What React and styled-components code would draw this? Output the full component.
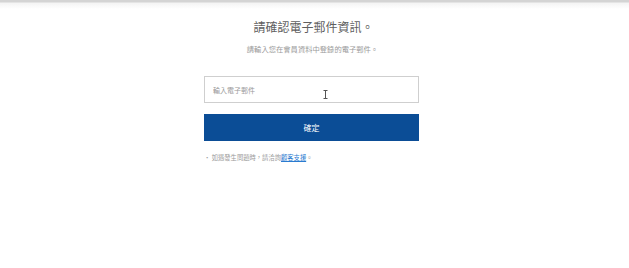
import React from 'react'
import styled, { createGlobalStyle } from 'styled-components'

const GlobalStyle = createGlobalStyle`
  html, body {
    margin: 0;
    padding: 0;
    background: #fff;
    font-family: "Noto Sans CJK TC", "Noto Sans", sans-serif;
  }
`;

const Page = styled.div`
  min-height: 268px;
  padding-right: 6px;
  background: linear-gradient(#d4d4d4 0, #d4d4d4 2px, #f4f4f4 3px, #fff 9px);
`;

const Panel = styled.div`
  width: 215px;
  margin: 0 auto;
  padding-top: 17px;
  display: flex;
  flex-direction: column;
`;

const Title = styled.h1`
  margin: 0;
  padding-left: 4px;
  text-align: center;
  font-size: 12px;
  font-weight: 400;
  line-height: 20px;
  color: #5f5f5f;
`;

const Subtitle = styled.p`
  margin: 6px 0 0;
  padding-left: 2px;
  text-align: center;
  font-size: 7.3px;
  line-height: 12px;
  color: #9a9a9a;
`;

const Field = styled.div`
  position: relative;
  margin-top: 21px;
  height: 27px;
  border: 1px solid #cfcfcf;
  box-sizing: border-box;
  display: flex;
  align-items: center;
  padding-left: 8px;
`;

const Input = styled.input`
  border: none;
  outline: none;
  background: none;
  width: 100%;
  font-family: inherit;
  font-size: 7px;
  color: #555;
  padding: 0;
  &::placeholder {
    color: #999;
  }
`;

const Cursor = styled.svg`
  position: absolute;
  left: 118px;
  top: 13px;
`;

const Button = styled.button`
  margin-top: 11px;
  height: 27px;
  border: none;
  background: #0b4d96;
  color: #fff;
  font-family: inherit;
  font-size: 8px;
  cursor: pointer;
`;

const Note = styled.p`
  margin: 12px 0 0;
  font-size: 6.3px;
  line-height: 10px;
  color: #9a9a9a;
`;

const Link = styled.a`
  color: #2a7bd0;
  text-decoration: underline;
`;

export default function App() {
  return (
    <>
      <GlobalStyle />
      <Page>
        <Panel>
          <Title>請確認電子郵件資訊。</Title>
          <Subtitle>請輸入您在會員資料中登錄的電子郵件。</Subtitle>
          <Field>
            <Input type="email" placeholder="輸入電子郵件" />
            <Cursor width="5" height="9" viewBox="0 0 5 9">
              <path d="M0.5 0.5h4M2.5 0.5v8M0.5 8.5h4" stroke="#555" strokeWidth="1" fill="none" />
            </Cursor>
          </Field>
          <Button>確定</Button>
          <Note>· 如遇發生問題時，請洽詢<Link href="#">顧客支援</Link>。</Note>
        </Panel>
      </Page>
    </>
  )
}
